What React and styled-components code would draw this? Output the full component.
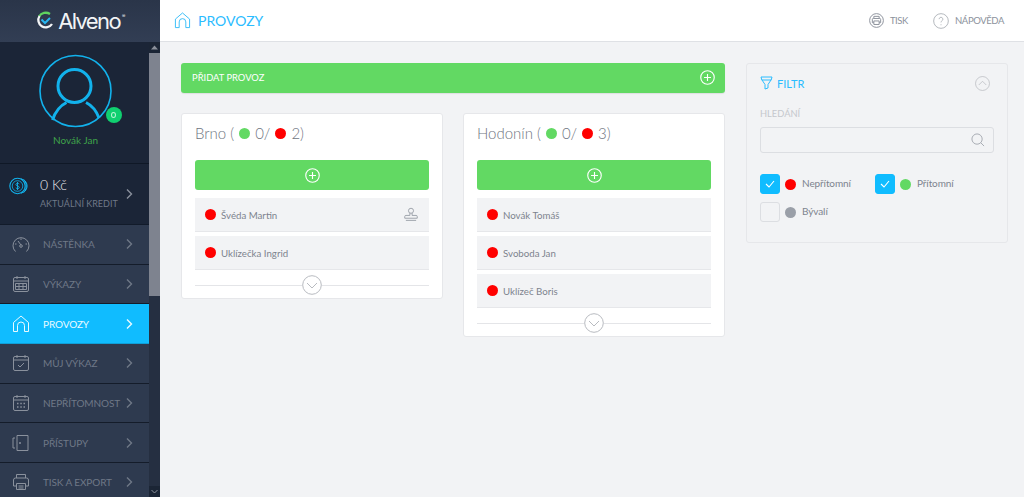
import React from "react";
import styled, { createGlobalStyle } from "styled-components";

const Global = createGlobalStyle`
  html, body { margin: 0; padding: 0; height: 100%; overflow: hidden; background: #f2f3f5; }
  body { font-family: "Lato", "Open Sans", sans-serif; }
  * { box-sizing: border-box; }
`;

const Page = styled.div`display: flex; width: 1024px; height: 497px; overflow: hidden;`;
const Sidebar = styled.aside`width: 160px; flex: none; display: flex; flex-direction: column; background: #2e3a4f;`;
const Brand = styled.div`height: 42px; flex: none; display: flex; align-items: center; justify-content: center; gap: 4px; background: linear-gradient(#2a3549, #323e54); color: #fff;`;
const BrandName = styled.span`font: 400 22px "Inter", sans-serif; letter-spacing: -1.6px; line-height: 1; color: #f2f4f6;`;
const Reg = styled.sup`font-size: 5px; margin-left: 2px; vertical-align: 11px;`;
const SideBody = styled.div`flex: 1; display: flex; min-height: 0;`;
const SideScroll = styled.div`width: 149px; flex: none; display: flex; flex-direction: column; overflow: hidden;`;
const Scrollbar = styled.div`width: 11px; flex: none; display: flex; flex-direction: column; background: #252f41;`;
const ScrollBtn = styled.div`height: 11px; display: flex; align-items: center; justify-content: center; background: #1b2535;`;
const Thumb = styled.div`height: 243px; background: #7e838f;`;
const ScrollGap = styled.div`flex: 1;`;
const Profile = styled.div`height: 122px; flex: none; background: #1b2537; border-bottom: 1px solid #0f1826; display: flex; flex-direction: column; align-items: center; padding-top: 12px; position: relative;`;
const AvatarWrap = styled.div`width: 74px; height: 74px; position: relative; margin-left: 2px;`;
const StatusDot = styled.span`position: absolute; right: -9px; bottom: 5px; width: 16px; height: 16px; border-radius: 50%; background: #10d070; display: flex; align-items: center; justify-content: center; &::after { content: ""; width: 3px; height: 4px; border-radius: 50%; border: 1px solid #b7f3d2; }`;
const ProfileName = styled.div`margin-top: 5px; font-size: 10px; line-height: 14px; color: #3fa34a; margin-left: 2px;`;
const Credit = styled.div`height: 61px; flex: none; display: flex; align-items: center; background: #1b2537; padding-left: 9px; border-bottom: 1px solid #121b2a;`;
const CoinWrap = styled.span`display: flex; align-self: flex-start; margin-top: 12px;`;
const CreditText = styled.div`width: 84px; margin-left: 11px; margin-top: -1px;`;
const Amount = styled.div`font-size: 14px; font-weight: 300; line-height: 18px; color: #e8ebef;`;
const CreditLabel = styled.div`font-size: 9px; line-height: 14px; margin-top: 3px; color: #6f7887; white-space: nowrap;`;
const NavItem = styled.div`
  height: 39.7px; flex: none; display: flex; align-items: center; padding-left: 12px;
  background: ${p => (p.$active ? "#10bcff" : "#2e3a4f")};
  border-bottom: 1px solid ${p => (p.$active ? "#0f9fd8" : "#141c2a")};
  color: ${p => (p.$active ? "#eafaff" : "#6f7887")};
`;
const NavLabel = styled.span`width: 85px; margin-left: 13px; font-size: 10px; letter-spacing: -0.1px; white-space: nowrap;`;
const ChevronWrap = styled.span`display: flex; margin-left: ${p => p.$ml || 0}px; margin-top: ${p => p.$mt || 0}px;`;

const Main = styled.main`flex: 1; min-width: 0; display: flex; flex-direction: column;`;
const Header = styled.header`height: 42px; flex: none; background: #fff; border-bottom: 1px solid #dfe1e5; display: flex; align-items: center; padding: 0 20px 0 14px;`;
const PageTitle = styled.h1`margin: 0 0 0 7px; font-size: 14px; font-weight: 400; color: #2bbcff; flex: 1;`;
const HeadAction = styled.div`display: flex; align-items: center; gap: 6px; font-size: 9.5px; letter-spacing: -0.4px; color: #8c929c; margin-left: 25px;`;
const Content = styled.div`flex: 1; display: flex; gap: 21px; padding: 21px 16px 0 21px; align-items: flex-start; background: #f2f3f5;`;
const LeftCol = styled.div`width: 544px; flex: none; display: flex; flex-direction: column; gap: 20px;`;
const AddBar = styled.div`height: 30px; background: #62d963; border-radius: 3px; display: flex; align-items: center; justify-content: space-between; padding: 0 10px 1px 11px; color: #fff; font-size: 9.4px; box-shadow: 0 1px 1px rgba(0,0,0,.08);`;
const Cards = styled.div`display: flex; gap: 20px; align-items: flex-start;`;
const Card = styled.section`width: 262px; background: #fff; border: 1px solid #e6e7ea; border-radius: 3px; padding: 7px 13px 0; height: ${p => p.$h}px;`;
const CardTitle = styled.h2`margin: 0; height: 24px; display: flex; align-items: center; font-size: 15px; font-weight: 300; color: #6f7581;`;
const Dot = styled.span`width: 11px; height: 11px; border-radius: 50%; flex: none; background: ${p => p.$c};`;
const TitleDot = styled(Dot)`margin: 0 5px;`;
const CardAdd = styled.div`height: 30px; margin-top: 15px; background: #62d963; border-radius: 3px; display: flex; align-items: center; justify-content: center;`;
const Rows = styled.div`margin-top: 8px; display: flex; flex-direction: column; gap: 4px;`;
const Row = styled.div`height: 34px; background: #f2f3f5; border-bottom: 1px solid #e6e7ea; display: flex; align-items: center; padding: 0 11px 0 10px; font-size: 9.7px; color: #7d838e; gap: 5px;`;
const RowName = styled.span`flex: 1;`;
const Expander = styled.div`height: 30px; display: flex; align-items: center; justify-content: center; position: relative; &::before { content: ""; position: absolute; left: 0; right: 0; top: 15px; height: 1px; background: #e4e5e8; }`;
const ExpanderBtn = styled.span`position: relative; display: flex; background: #fff; border-radius: 50%;`;

const Filter = styled.aside`width: 262px; flex: none; height: 180px; border: 1px solid #e6e7ea; border-radius: 3px; padding: 10px 13px 0; background: #f2f3f5;`;
const FilterHead = styled.div`display: flex; align-items: center; height: 18px; color: #2bbcff; font-size: 11px; padding-right: 4px; justify-content: space-between;`;
const FilterTitle = styled.span`display: flex; align-items: center; gap: 4px;`;
const SearchLabel = styled.div`font-size: 9.3px; color: #c5c8cd; margin-top: 16px; line-height: 12px;`;
const SearchBox = styled.div`height: 26px; margin-top: 7px; border: 1px solid #dcdee2; border-radius: 3px; display: flex; align-items: center; justify-content: flex-end; padding-right: 8px;`;
const Checks = styled.div`display: grid; grid-template-columns: 115px 1fr; row-gap: 8px; margin-top: 21px;`;
const Check = styled.div`display: flex; align-items: center; font-size: 10px; letter-spacing: -0.1px; color: #7d838e;`;
const Box = styled.span`width: 20px; height: 20px; border-radius: 3px; display: flex; align-items: center; justify-content: center; margin-right: 5px; background: ${p => (p.$on ? "#10bcff" : "transparent")}; border: 1px solid ${p => (p.$on ? "#10bcff" : "#dcdee2")};`;
const CheckLabel = styled.span`margin: 0 0 2px 6px;`;

const Chevron = ({ c = "currentColor", s = 14 }) => (
  <svg width={s} height={s} viewBox="0 0 14 14" fill="none" stroke={c} strokeWidth="1.4"><path d="M5 2.500 9.500 7 5 11.500" /></svg>
);
const Plus = ({ s = 15 }) => (
  <svg width={s} height={s} viewBox="0 0 16 16" fill="none" stroke="#fff" strokeWidth="1.2"><circle cx="8" cy="8" r="7.200" /><path d="M8 4.300v7.400M4.300 8h7.400" /></svg>
);
const Home = ({ s = 17, c = "currentColor" }) => (
  <svg width={s} height={s} viewBox="0 0 18 18" fill="none" stroke={c} strokeWidth="1"><path d="M1.500 16.500V7.500L9 1l7.500 6.500v9h-4v-6a3.500 3.500 0 0 0-7 0v6z" strokeLinejoin="round" /></svg>
);
const Logo = () => (
  <svg width="18" height="20" viewBox="0 0 18 20" fill="none">
    <path d="M3 5.500A8 8 0 0 1 14 3" stroke="#5fd35f" strokeWidth="2.300" />
    <path d="M3.500 5a7.300 7.300 0 1 0 12.500 8" stroke="#f2f4f6" strokeWidth="2.300" />
    <path d="M5.500 8.500l3.500 3.500 5-5" stroke="#28b6f0" strokeWidth="2" />
  </svg>
);
const Avatar = () => (
  <svg width="74" height="74" viewBox="0 0 74 74" fill="none" stroke="#12b2ec">
    <circle cx="36.500" cy="37" r="35.500" strokeWidth="1.600" />
    <circle cx="35.500" cy="32" r="16.500" strokeWidth="3" />
    <path d="M13.500 66c3-9 9-15 14-17.500M60 64c-3-8-8-13-13-15.500" strokeWidth="3" />
  </svg>
);
const Coin = () => (
  <svg width="20" height="20" viewBox="0 0 20 20" fill="none" stroke="#12b2ec"><circle cx="8.500" cy="10" r="7.700" strokeWidth="1.100"/><circle cx="8.500" cy="10" r="5.300" strokeWidth=".8"/><path d="M12 2.700a7.700 7.700 0 0 1 0 14.600M14.500 3.500a7.700 7.700 0 0 1 0 13" strokeWidth="1"/><path d="M10.300 8C9.600 7 7 7 6.900 8.500c-.1 1.800 3.500 1 3.400 3 0 1.300-2.600 1.400-3.500.3M8.500 6v8" strokeWidth=".9"/></svg>
);
const Gauge = () => (
  <svg width="18" height="18" viewBox="0 0 18 18" fill="none" stroke="#8a919d" strokeWidth="1"><path d="M3.500 16.500A8 8 0 1 1 14.500 16.500M9 10l-3-4M9 3.500v1.500M3 9h1.500M15 9h-1.500"/><circle cx="9" cy="11" r="1.300"/></svg>
);
const Cal = ({ kind }) => (
  <svg width="18" height="18" viewBox="0 0 18 18" fill="none" stroke="#8a919d" strokeWidth="1">
    <rect x="1.500" y="2.500" width="15" height="14" rx="1.500"/>
    <path d="M1.500 6h15M5 1v3M13 1v3"/>
    {kind === "check" && <path d="M6 11l2 2 4-4" />}
    {kind === "grid" && <path d="M3.500 8.500h11v6h-11zM7 8.500v6M11 8.500v6M3.500 11.500h11"/>}
    {kind === "dots" && <path d="M5 9.500h1.500M8.300 9.500h1.500M11.500 9.500H13M5 13h1.500M8.300 13h1.500M11.500 13H13" strokeWidth="1.400"/>}
  </svg>
);
const Door = () => (
  <svg width="18" height="18" viewBox="0 0 18 18" fill="none" stroke="#8a919d" strokeWidth="1"><path d="M5 1.500h11v15H5zM3 4H1v10h2"/><circle cx="8" cy="9" r=".6" fill="#8a919d"/></svg>
);
const Printer = ({ s = 18, c = "#8a919d" }) => (
  <svg width={s} height={s} viewBox="0 0 18 18" fill="none" stroke={c} strokeWidth="1"><path d="M4.500 5V1.500h9V5M4.500 13H1.500V7a2 2 0 0 1 2-2h11a2 2 0 0 1 2 2v6h-3"/><path d="M4.500 10.500h9v6h-9zM6.500 13h5M6.500 15h5"/></svg>
);
const Stamp = () => (
  <svg width="14" height="15" viewBox="0 0 15 15" fill="none" stroke="#9a9fa8" strokeWidth="1"><circle cx="7.500" cy="3.500" r="2.700"/><path d="M6.300 6v2.500H2a1.200 1.200 0 0 0-1.200 1.200V11.500h13.400V9.700A1.200 1.200 0 0 0 13 8.500H8.700V6M2 13.800h11"/></svg>
);
const ExpandIcon = ({ up, s = 20, c = "#b8bbc0" }) => (
  <svg width={s} height={s} viewBox="0 0 20 20" fill="none" stroke={c} strokeWidth="1"><circle cx="10" cy="10" r="9.300"/><path d={up ? "M5 12l5-5 5 5" : "M5 8l5 5 5-5"}/></svg>
);
const RoundPrinter = () => (
  <svg width="15" height="15" viewBox="0 0 17 17" fill="none" stroke="#8c929c" strokeWidth="1.100"><circle cx="8.500" cy="8.500" r="7.800"/><path d="M5.500 6V3.800h6V6M5.500 11H3.800V7.200a1 1 0 0 1 1-1h7.400a1 1 0 0 1 1 1V11h-1.700M5.500 9h6v4h-6z"/></svg>
);
const Funnel = () => (
  <svg width="13" height="14" viewBox="0 0 13 14" fill="none" stroke="#2bbcff" strokeWidth="1"><path d="M1 1h11l-.8 3H1.800zM2 4l3 4.500v4.500l3-1V8.500L11 4"/></svg>
);
const Search = () => (
  <svg width="14" height="14" viewBox="0 0 15 15" fill="none" stroke="#a4a8af" strokeWidth="1"><circle cx="6.500" cy="6.500" r="5.500"/><path d="M10.500 10.500L14 14"/></svg>
);
const Tick = () => (
  <svg width="10" height="8" viewBox="0 0 10 8" fill="none" stroke="#fff" strokeWidth="1.100"><path d="M1 4l3 3 5-6"/></svg>
);

const nav = [
  { label: "NÁSTĚNKA", icon: <Gauge /> },
  { label: "VÝKAZY", icon: <Cal kind="grid" /> },
  { label: "PROVOZY", icon: <Home s={18} c="#eafaff" />, active: true },
  { label: "MŮJ VÝKAZ", icon: <Cal kind="check" /> },
  { label: "NEPŘÍTOMNOST", icon: <Cal kind="dots" /> },
  { label: "PŘÍSTUPY", icon: <Door /> },
  { label: "TISK A EXPORT", icon: <Printer /> },
];

const cards = [
  { name: "Brno", total: 2, h: 186, rows: [{ n: "Švéda Martin", stamp: true }, { n: "Uklízečka Ingrid" }] },
  { name: "Hodonín", total: 3, h: 224, rows: [{ n: "Novák Tomáš" }, { n: "Svoboda Jan" }, { n: "Uklízeč Boris" }] },
];

export default function App() {
  return (
    <Page>
      <Global />
      <Sidebar>
        <Brand><Logo /><BrandName>Alveno<Reg>®</Reg></BrandName></Brand>
        <SideBody>
          <SideScroll>
            <Profile>
              <AvatarWrap><Avatar /><StatusDot /></AvatarWrap>
              <ProfileName>Novák Jan</ProfileName>
            </Profile>
            <Credit>
              <CoinWrap><Coin /></CoinWrap>
              <CreditText><Amount>0 Kč</Amount><CreditLabel>AKTUÁLNÍ KREDIT</CreditLabel></CreditText>
              <ChevronWrap $ml={-2}><Chevron c="#8a919d" /></ChevronWrap>
            </Credit>
            {nav.map(n => (
              <NavItem key={n.label} $active={n.active}>
                {n.icon}
                <NavLabel>{n.label}</NavLabel>
                <ChevronWrap $ml={-6}><Chevron /></ChevronWrap>
              </NavItem>
            ))}
          </SideScroll>
          <Scrollbar>
            <ScrollBtn><svg width="7" height="5" viewBox="0 0 7 5" fill="#8a8f99"><path d="M3.500 0.500 7 4.500H0z"/></svg></ScrollBtn>
            <Thumb />
            <ScrollGap />
            <ScrollBtn><svg width="7" height="5" viewBox="0 0 7 5" fill="none" stroke="#8a8f99"><path d="M.5 1l3 3 3-3"/></svg></ScrollBtn>
          </Scrollbar>
        </SideBody>
      </Sidebar>
      <Main>
        <Header>
          <Home c="#35bcf8" />
          <PageTitle>PROVOZY</PageTitle>
          <HeadAction><RoundPrinter />TISK</HeadAction>
          <HeadAction>
            <svg width="16" height="16" viewBox="0 0 17 17" fill="none" stroke="#b0b4ba" strokeWidth="1"><circle cx="8.500" cy="8.500" r="7.800"/><path d="M6.500 6.500a2 2 0 1 1 3 1.800c-.7.400-1 .8-1 1.700M8.500 12v1"/></svg>
            NÁPOVĚDA
          </HeadAction>
        </Header>
        <Content>
          <LeftCol>
            <AddBar>PŘIDAT PROVOZ<Plus /></AddBar>
            <Cards>
              {cards.map(c => (
                <Card key={c.name} $h={c.h}>
                  <CardTitle>
                    <span>{c.name} (</span>
                    <TitleDot $c="#62d963" />
                    <span>0/</span>
                    <TitleDot $c="#ff0000" />
                    <span>{c.total})</span>
                  </CardTitle>
                  <CardAdd><Plus /></CardAdd>
                  <Rows>
                    {c.rows.map(r => (
                      <Row key={r.n}>
                        <Dot $c="#ff0000" />
                        <RowName>{r.n}</RowName>
                        {r.stamp && <Stamp />}
                      </Row>
                    ))}
                  </Rows>
                  <Expander><ExpanderBtn><ExpandIcon /></ExpanderBtn></Expander>
                </Card>
              ))}
            </Cards>
          </LeftCol>
          <Filter>
            <FilterHead>
              <FilterTitle><Funnel />FILTR</FilterTitle>
              <ExpandIcon up s={15} />
            </FilterHead>
            <SearchLabel>HLEDÁNÍ</SearchLabel>
            <SearchBox><Search /></SearchBox>
            <Checks>
              <Check><Box $on><Tick /></Box><Dot $c="#ff0000" /><CheckLabel>Nepřítomní</CheckLabel></Check>
              <Check><Box $on><Tick /></Box><Dot $c="#62d963" /><CheckLabel>Přítomní</CheckLabel></Check>
              <Check><Box /><Dot $c="#9a9fa8" /><CheckLabel>Bývalí</CheckLabel></Check>
            </Checks>
          </Filter>
        </Content>
      </Main>
    </Page>
  );
}
